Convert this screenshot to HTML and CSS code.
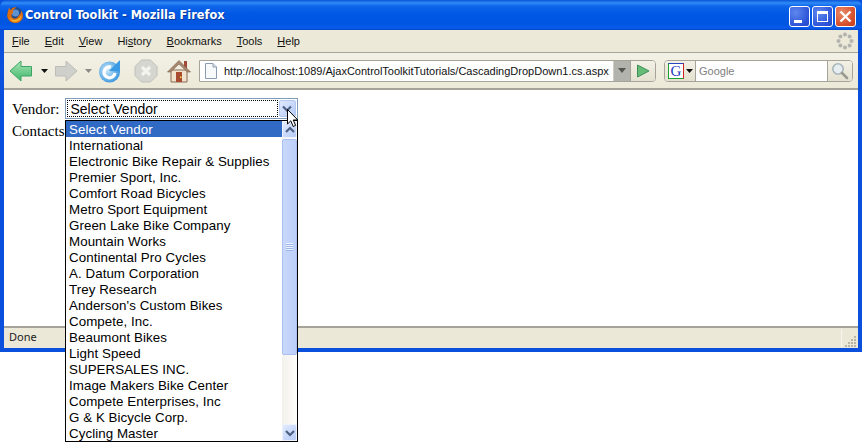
FILE: index.html
```html
<!DOCTYPE html>
<html lang="en">
<head>
<meta charset="utf-8">
<title>Control Toolkit - Mozilla Firefox</title>
<link rel="stylesheet" href="styles.css">
</head>
<body>
<div class="window">
  <header class="titlebar">
    <svg class="ff-logo" width="18" height="18" viewBox="0 0 18 18">
      <circle cx="9" cy="9" r="8" fill="#1d4a8c"/>
      <circle cx="9.5" cy="7" r="3.6" fill="#5f93cf"/>
      <path d="M3 1.5 C2 6 .6 9 1.6 12 C4 18 11.5 18.6 15.2 14.4 C17.6 12 17.4 7.6 15 4.6 C15.2 8 13.4 9.4 12.2 10 C12 12.2 9 13.2 7 12 C5 11 5 8 7 7 C6 5 8 3 10.2 1.6 C8 .8 6 2 5 4 C4 4 3.8 3 3 1.5Z" fill="#dd6d12"/>
      <path d="M3.5 11 C6 15.4 12 15 15.4 9.5 C15.6 13 12 16.4 8 15.8 C5.6 15.4 4 13 3.5 11Z" fill="#f6b52e"/>
    </svg>
    <span class="title-text">Control Toolkit - Mozilla Firefox</span>
    <div class="win-buttons">
      <div class="win-btn win-blue"><span class="glyph-min"></span></div>
      <div class="win-btn win-blue"><span class="glyph-max"></span></div>
      <div class="win-btn win-red">
        <svg width="13" height="13" viewBox="0 0 13 13"><path d="M1.5 1.5 L11.5 11.5 M11.5 1.5 L1.5 11.5" stroke="#fff" stroke-width="2.4"/></svg>
      </div>
    </div>
  </header>

  <div class="frame">
    <nav class="menubar">
      <span class="menu"><u>F</u>ile</span>
      <span class="menu"><u>E</u>dit</span>
      <span class="menu"><u>V</u>iew</span>
      <span class="menu">Hi<u>s</u>tory</span>
      <span class="menu"><u>B</u>ookmarks</span>
      <span class="menu"><u>T</u>ools</span>
      <span class="menu"><u>H</u>elp</span>
      <svg class="throbber" width="18" height="18" viewBox="0 0 18 18" fill="#b4b4ae">
        <circle cx="9" cy="2.5" r="2"/><circle cx="13.6" cy="4.4" r="2"/><circle cx="15.5" cy="9" r="2"/><circle cx="13.6" cy="13.6" r="2"/>
        <circle cx="9" cy="15.5" r="2"/><circle cx="4.4" cy="13.6" r="2"/><circle cx="2.5" cy="9" r="2"/><circle cx="4.4" cy="4.4" r="2"/>
      </svg>
    </nav>

    <div class="toolbar">
      <svg class="ico-back" width="24" height="24" viewBox="0 0 24 24">
        <defs><linearGradient id="gb" x1="0" y1="0" x2="0" y2="1"><stop offset="0" stop-color="#a8e6b4"/><stop offset="1" stop-color="#3fb56a"/></linearGradient></defs>
        <path d="M1 12 L12 2 V7.5 H22.5 V17 H12 V22 Z" fill="url(#gb)" stroke="#3aa566" stroke-width="1"/>
      </svg>
      <svg class="drop-arrow" width="7" height="4" viewBox="0 0 7 4"><path d="M0 0H7L3.5 4Z" fill="#111"/></svg>
      <svg class="ico-fwd" width="24" height="24" viewBox="0 0 24 24">
        <path d="M23 12 L12 2 V7.5 H1.5 V17 H12 V22 Z" fill="#cfcfcb" stroke="#bdbdb8" stroke-width="1"/>
      </svg>
      <svg class="drop-arrow-off" width="7" height="4" viewBox="0 0 7 4"><path d="M0 0H7L3.5 4Z" fill="#8a8a86"/></svg>
      <svg class="ico-reload" width="24" height="24" viewBox="0 0 24 24">
        <defs><radialGradient id="gr" cx=".4" cy=".4" r=".7"><stop offset="0" stop-color="#cfeafa"/><stop offset="1" stop-color="#2c8fdc"/></radialGradient></defs>
        <circle cx="11.5" cy="13" r="10.5" fill="url(#gr)"/>
        <path d="M17 14 A5.5 5.5 0 1 1 13 8" fill="none" stroke="#fff" stroke-width="3.2"/>
        <path d="M11 12 L22 12.5 L22 1 Z" fill="#3a9ae4"/>
      </svg>
      <svg class="ico-stop" width="24" height="24" viewBox="0 0 24 24">
        <path d="M7.5 1 H16.5 L23 7.5 V16.5 L16.5 23 H7.5 L1 16.5 V7.5 Z" fill="#d6d6d0" stroke="#c0c0ba"/>
        <path d="M8 8 L16 16 M16 8 L8 16" stroke="#f3f3ef" stroke-width="3.2"/>
      </svg>
      <svg class="ico-home" width="24" height="24" viewBox="0 0 24 24">
        <path d="M17 2h3v7h-3z" fill="#a04a3a"/>
        <path d="M4 11 H20 V23 H4 Z" fill="#f0e2cc" stroke="#8a6a50"/>
        <path d="M0.5 13 L12 1.5 L23.5 13 L20.5 13 L12 5 L3.5 13 Z" fill="#a98870" stroke="#7a5a48" stroke-width=".6"/>
        <path d="M9 13h6v10H9z" fill="#a84a30"/>
        <rect x="13" y="17.5" width="1.5" height="1.5" fill="#f4e04a"/>
      </svg>

      <div class="urlbar">
        <svg class="page-ico" width="14" height="16" viewBox="0 0 14 16">
          <path d="M1.5 .5 H9 L12.5 4 V15.5 H1.5 Z" fill="#f8f9fb" stroke="#8c9cb0"/>
          <path d="M9 .5 V4 H12.5" fill="#dfe5ec" stroke="#8c9cb0"/>
        </svg>
        <span class="url-text">http://localhost:1089/AjaxControlToolkitTutorials/CascadingDropDown1.cs.aspx</span>
        <div class="url-drop"><svg width="8" height="5" viewBox="0 0 8 5"><path d="M0 0H8L4 5Z" fill="#55554f"/></svg></div>
        <div class="url-go">
          <svg width="14" height="14" viewBox="0 0 14 14">
            <path d="M1.5 1 L13 7 L1.5 13 Z" fill="#66bb77" stroke="#3d8f58"/>
          </svg>
        </div>
      </div>

      <div class="searchbar">
        <div class="engine">
          <div class="g-box"><span class="g-letter">G</span></div>
          <svg width="7" height="4" viewBox="0 0 7 4"><path d="M0 0H7L3.5 4Z" fill="#111"/></svg>
        </div>
        <span class="search-text">Google</span>
        <div class="search-go">
          <svg width="18" height="18" viewBox="0 0 18 18">
            <circle cx="7" cy="7" r="5.2" fill="#e6eef2" stroke="#a9b6ba" stroke-width="1.6"/>
            <path d="M11 11 L16 16" stroke="#9a9a90" stroke-width="2.6" stroke-linecap="round"/>
          </svg>
        </div>
      </div>
    </div>

    <main class="content">
      <div class="form-row">
        <span class="label">Vendor:</span>
        <div class="select">
          <span class="select-value">Select Vendor</span>
          <div class="select-btn"><svg width="10" height="8" viewBox="0 0 10 8"><path d="M1 1.5 L5 5.5 L9 1.5" fill="none" stroke="#4d6185" stroke-width="2.2"/></svg></div>
        </div>
      </div>
      <div class="form-row"><span class="label">Contacts:</span></div>
    </main>

    <footer class="statusbar">
      <span class="status-text">Done</span>
      <span class="status-sep"></span>
      <svg class="grip" width="12" height="12" viewBox="0 0 12 12" fill="#b8b5a4">
        <rect x="9" y="1" width="2" height="2"/><rect x="6" y="4" width="2" height="2"/><rect x="9" y="4" width="2" height="2"/>
        <rect x="3" y="7" width="2" height="2"/><rect x="6" y="7" width="2" height="2"/><rect x="9" y="7" width="2" height="2"/>
        <rect x="0" y="10" width="2" height="2"/><rect x="3" y="10" width="2" height="2"/><rect x="6" y="10" width="2" height="2"/><rect x="9" y="10" width="2" height="2"/>
      </svg>
    </footer>
  </div>
</div>

<div class="listbox">
  <ul class="options">
    <li class="option selected">Select Vendor</li>
    <li class="option">International</li>
    <li class="option">Electronic Bike Repair &amp; Supplies</li>
    <li class="option">Premier Sport, Inc.</li>
    <li class="option">Comfort Road Bicycles</li>
    <li class="option">Metro Sport Equipment</li>
    <li class="option">Green Lake Bike Company</li>
    <li class="option">Mountain Works</li>
    <li class="option">Continental Pro Cycles</li>
    <li class="option">A. Datum Corporation</li>
    <li class="option">Trey Research</li>
    <li class="option">Anderson's Custom Bikes</li>
    <li class="option">Compete, Inc.</li>
    <li class="option">Beaumont Bikes</li>
    <li class="option">Light Speed</li>
    <li class="option">SUPERSALES INC.</li>
    <li class="option">Image Makers Bike Center</li>
    <li class="option">Compete Enterprises, Inc</li>
    <li class="option">G &amp; K Bicycle Corp.</li>
    <li class="option">Cycling Master</li>
  </ul>
  <div class="scrollbar">
    <div class="sb-btn"><svg width="10" height="8" viewBox="0 0 10 8"><path d="M1 6 L5 2 L9 6" fill="none" stroke="#4d6185" stroke-width="2.2"/></svg></div>
    <div class="sb-thumb"><span class="sb-grip"></span></div>
    <div class="sb-track"></div>
    <div class="sb-btn"><svg width="10" height="8" viewBox="0 0 10 8"><path d="M1 2 L5 6 L9 2" fill="none" stroke="#4d6185" stroke-width="2.2"/></svg></div>
  </div>
</div>

<svg class="cursor" width="12" height="19" viewBox="0 0 12 19">
  <path d="M.5 .5 V15 L3.8 11.8 L6.2 17.5 L8.6 16.4 L6.2 11 H10.8 Z" fill="#fff" stroke="#000"/>
</svg>
</body>
</html>
```

FILE: styles.css
```css
* { box-sizing: border-box; }
html, body { margin: 0; padding: 0; background: #fff; }
body { position: relative; width: 862px; height: 442px; overflow: hidden; }

.window {
  width: 862px;
  height: 352px;
  display: flex;
  flex-direction: column;
  background: #0a50dc;
}

.titlebar {
  height: 30px;
  flex: none;
  display: flex;
  align-items: center;
  padding: 0 6px 0 6px;
  background: linear-gradient(to bottom, #0a55d8 0, #2f8cf6 3px, #0f66ea 6px, #0058e4 14px, #0055e0 24px, #0a5cee 28px, #0044c4 30px);
  border-radius: 7px 7px 0 0;
}
.ff-logo { flex: none; margin-bottom: 1px; }
.title-text {
  margin-left: 1px;
  color: #fff;
  font: bold 12.6px/1 "DejaVu Sans Condensed", "DejaVu Sans", sans-serif;
  font-stretch: condensed;
  text-shadow: 1px 1px 0 #0a3a9c;
}
.win-buttons { margin-left: auto; display: flex; gap: 2px; padding-top: 3px; }
.win-btn {
  width: 21px;
  height: 21px;
  border: 1px solid #fff;
  border-radius: 3px;
  display: flex;
  align-items: center;
  justify-content: center;
  position: relative;
}
.win-blue { background: radial-gradient(circle at 30% 30%, #5f88ee, #2c54d8 70%, #2448c0); }
.win-red { background: radial-gradient(circle at 30% 30%, #ea8a68, #d8502c 65%, #c03c1c); }
.glyph-min { width: 8px; height: 3px; background: #fff; margin: 9px 4px 0 0; }
.glyph-max { width: 11px; height: 11px; border: 1px solid #fff; border-top-width: 3px; }

.frame {
  flex: 1;
  margin: 0 4px 4px;
  display: flex;
  flex-direction: column;
  min-height: 0;
  background: #ece9d8;
}

.menubar {
  height: 23px;
  flex: none;
  display: flex;
  align-items: center;
  padding: 0 0 0 8px;
  gap: 15px;
  background: #ece9d8;
  border-bottom: 1px solid #a5a39a;
  font: 11px/1 "Liberation Sans", sans-serif;
  color: #111;
}
.throbber { margin-left: auto; margin-right: 4px; }

.toolbar {
  height: 37px;
  flex: none;
  display: flex;
  align-items: center;
  padding: 0 0 0 5px;
  background: linear-gradient(to bottom, #f3f1e6, #ece9d8);
  border-bottom: 2px solid #a5a39a;
}
.ico-back { flex: none; }
.drop-arrow { margin: 0 0 0 8px; flex: none; }
.ico-fwd { margin-left: 6px; flex: none; }
.drop-arrow-off { margin-left: 7px; flex: none; }
.ico-reload { margin-left: 6px; flex: none; }
.ico-stop { margin-left: 12px; flex: none; }
.ico-home { margin-left: 9px; flex: none; }

.urlbar {
  margin-left: 8px;
  width: 457px;
  height: 22px;
  display: flex;
  align-items: stretch;
  border: 1px solid #a5a39a;
  background: #fff;
  border-radius: 0 4px 4px 0;
  flex: none;
}
.page-ico { margin: 2px 0 0 4px; flex: none; }
.url-text {
  margin-left: 6px;
  flex: 1;
  font: 11px/20px "Liberation Sans", sans-serif;
  color: #111;
  white-space: nowrap;
}
.url-drop {
  width: 17px;
  flex: none;
  background: #b3b3ad;
  border-left: 1px solid #d0cec2;
  display: flex;
  align-items: center;
  justify-content: center;
}
.url-go {
  width: 25px;
  flex: none;
  background: linear-gradient(to bottom, #f3f1e6, #e4e1d0);
  border-left: 1px solid #a5a39a;
  display: flex;
  align-items: center;
  justify-content: center;
  border-radius: 0 3px 3px 0;
}

.searchbar {
  margin-left: 8px;
  width: 189px;
  height: 22px;
  flex: none;
  display: flex;
  align-items: stretch;
  border: 1px solid #a5a39a;
  border-radius: 4px;
  background: #fff;
}
.engine {
  width: 31px;
  flex: none;
  display: flex;
  align-items: center;
  gap: 2px;
  padding-left: 3px;
  background: linear-gradient(to bottom, #f3f1e6, #e4e1d0);
  border-right: 1px solid #a5a39a;
  border-radius: 3px 0 0 3px;
}
.g-box {
  width: 16px;
  height: 16px;
  flex: none;
  background: #fff;
  border: 1px solid;
  border-color: #2846c0 #d02020 #1ea030 #1ea030;
  display: flex;
  align-items: center;
  justify-content: center;
}
.g-letter { font: 15px/14px "Liberation Serif", serif; color: #1c3cc0; }
.search-text { flex: 1; margin-left: 3px; font: 11px/20px "Liberation Sans", sans-serif; color: #808080; }
.search-go {
  width: 25px;
  flex: none;
  background: linear-gradient(to bottom, #f3f1e6, #e4e1d0);
  border-left: 1px solid #a5a39a;
  display: flex;
  align-items: center;
  justify-content: center;
  border-radius: 0 3px 3px 0;
}

.content {
  flex: 1;
  background: #fff;
  padding: 8px 0 0 8px;
  min-height: 0;
}
.form-row { display: flex; align-items: center; height: 22px; }
.label { font: 15px/18px "Liberation Serif", serif; color: #000; margin-right: 5px; }
.select {
  width: 233px;
  height: 21px;
  margin-top: -1px;
  border: 1px solid #7f9db9;
  background: #fff;
  display: flex;
  align-items: stretch;
  padding: 1px;
}
.select-value {
  flex: 1;
  border: 1px dotted #000;
  padding-left: 3px;
  font: 14px/17px "Liberation Sans", sans-serif;
  color: #000;
}
.select-btn {
  width: 17px;
  margin-left: 1px;
  flex: none;
  background: linear-gradient(135deg, #dfe8fd, #b7cbf8);
  border: 1px solid #b4c8f0;
  border-radius: 2px;
  display: flex;
  align-items: center;
  justify-content: center;
}

.statusbar {
  height: 22px;
  flex: none;
  display: flex;
  align-items: center;
  padding: 0 0 3px 5px;
  background: #ebe8d7;
  border-top: 2px solid #a5a39a;
}
.status-text { font: 11px/1 "Noto Sans", sans-serif; color: #222; }
.status-sep { margin-left: auto; width: 1px; height: 18px; margin-top: 3px; background: #f8f7ef; }
.grip { margin-left: 3px; margin-right: 1px; margin-top: 9px; }

.listbox {
  position: absolute;
  left: 65px;
  top: 120px;
  width: 233px;
  height: 322px;
  border: 1px solid #000;
  background: #fff;
  display: flex;
  overflow: hidden;
}
.options {
  list-style: none;
  margin: 0;
  padding: 0;
  flex: 1;
  min-width: 0;
}
.option {
  height: 16px;
  padding-left: 3px;
  font: 13.33px/18px "Liberation Sans", sans-serif;
  letter-spacing: .06px;
  color: #000;
  white-space: nowrap;
}
.selected { background: #316ac5; color: #fff; }
.scrollbar {
  width: 15px;
  flex: none;
  display: flex;
  flex-direction: column;
  background: linear-gradient(to right, #f3f1ec, #fdfdfa);
}
.sb-btn {
  height: 17px;
  flex: none;
  background: linear-gradient(135deg, #e2ebfe, #b7cbf8);
  border: 1px solid #eef2fd;
  border-radius: 2px;
  display: flex;
  align-items: center;
  justify-content: center;
}
.sb-thumb {
  margin-top: 1px;
  height: 216px;
  flex: none;
  background: linear-gradient(to right, #c9d8fb, #bccffa);
  border: 1px solid #a9c0f0;
  border-radius: 2px;
  display: flex;
  align-items: center;
  justify-content: center;
}
.sb-grip { width: 7px; height: 8px; background: repeating-linear-gradient(to bottom, #eef3fe 0 1px, #9db7ee 1px 2px); }
.sb-track { flex: 1; }

.cursor { position: absolute; left: 287px; top: 109px; }
```
